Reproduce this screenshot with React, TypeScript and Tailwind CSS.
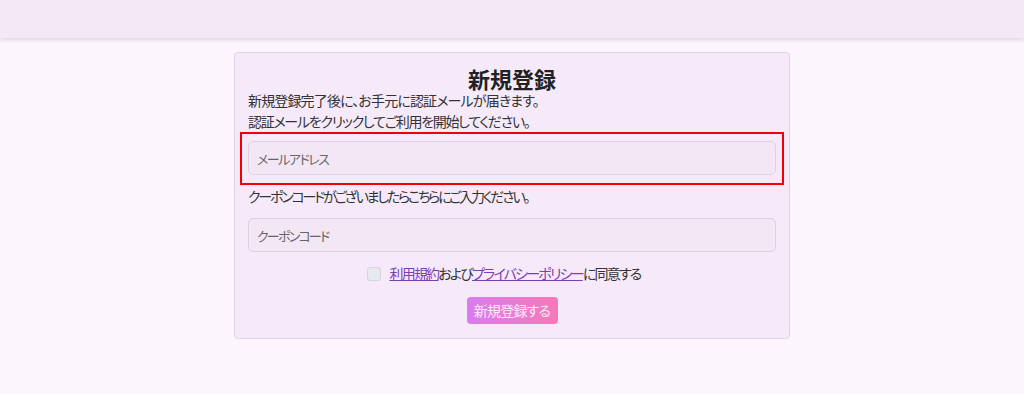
import React from "react";

const jp = { fontFamily: '"Noto Sans CJK JP", "Noto Sans", sans-serif', fontFeatureSettings: '"palt"' } as React.CSSProperties;

export default function App() {
  return (
    <div className="min-h-[394px] w-full bg-[#fcf5fd] text-[#333]" style={jp}>
      <div className="h-[38px] w-full bg-[#f4e8f6] shadow-[0_2px_4px_rgba(0,0,0,0.12)]" />
      <div className="mx-auto mt-[14px] w-[556px] rounded-[4px] border border-[#ddd5e0] bg-[#f6eafa] px-[13px] pt-[13px] pb-[14px]">
        <h1 className="text-center text-[22px] font-bold leading-[24px] text-[#222]">新規登録</h1>
        <p className="text-[14px] leading-[21px] tracking-[-0.85px]">新規登録完了後に、お手元に認証メールが届きます。</p>
        <p className="text-[14px] leading-[21px] tracking-[-1.28px]">認証メールをクリックしてご利用を開始してください。</p>
        <div className="-mx-[8px] border-2 border-[#f00000] px-[6px] pt-[7px] pb-[8px]">
          <input
            type="email"
            placeholder="メールアドレス"
            className="block h-[34px] w-full rounded-[5px] border border-[#dcd1df] bg-[#f3e7f5] px-[8px] text-[13px] tracking-[-1.5px] text-[#333] placeholder:text-[#666] outline-none"
            style={jp}
          />
        </div>
        <p className="mt-[1px] text-[14px] leading-[21px] tracking-[-2.2px]">クーポンコードがございましたらこちらにご入力ください。</p>
        <input
          type="text"
          placeholder="クーポンコード"
          className="mt-[11px] block h-[34px] w-full rounded-[5px] border border-[#dcd1df] bg-[#f3e7f5] px-[8px] text-[13px] tracking-[-1.8px] text-[#333] placeholder:text-[#666] outline-none"
          style={jp}
        />
        <div className="mt-[11px] flex items-center justify-center gap-[8px] pr-[16px] text-[14px] leading-[21px]">
          <span className="inline-block h-[14px] w-[14px] rounded-[3px] border border-[#d3d5da] bg-[#e8e9ee]" />
          <span className="tracking-[-1.8px]">
            <a className="text-[#7b3fb4] underline decoration-[#7b3fb4]">利用規約</a>および
            <a className="text-[#7b3fb4] underline decoration-[#7b3fb4]">プライバシーポリシー</a>に同意する
          </span>
        </div>
        <div className="mt-[13px] flex justify-center">
          <button
            className="h-[27px] w-[91px] rounded-[4px] bg-gradient-to-r from-[#d97bf0] to-[#f778b6] text-[14px] tracking-[-0.8px] text-white/85"
            style={jp}
          >
            新規登録する
          </button>
        </div>
      </div>
    </div>
  );
}
